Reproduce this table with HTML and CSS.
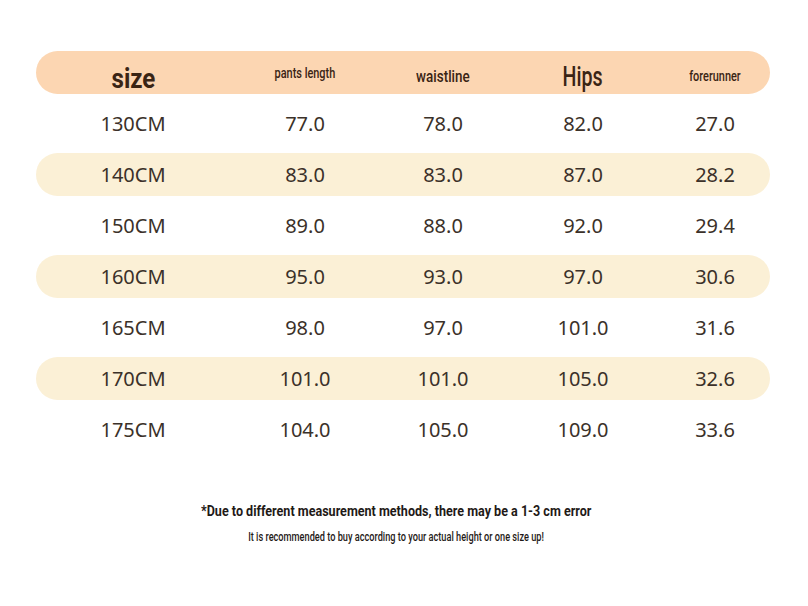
FILE: index.html
```html
<!DOCTYPE html>
<html>
<head>
<meta charset="utf-8">
<link rel="stylesheet" href="styles.css">
</head>
<body>
<div class="page">
  <div class="table">
    <div class="row head">
      <div class="cell c-size"><span>size</span></div>
      <div class="cell c-pants"><span>pants length</span></div>
      <div class="cell c-waist"><span>waistline</span></div>
      <div class="cell c-hips"><span>Hips</span></div>
      <div class="cell c-fore"><span>forerunner</span></div>
    </div>
    <div class="row"><div class="cell">130CM</div><div class="cell">77.0</div><div class="cell">78.0</div><div class="cell">82.0</div><div class="cell">27.0</div></div>
    <div class="row alt"><div class="cell">140CM</div><div class="cell">83.0</div><div class="cell">83.0</div><div class="cell">87.0</div><div class="cell">28.2</div></div>
    <div class="row"><div class="cell">150CM</div><div class="cell">89.0</div><div class="cell">88.0</div><div class="cell">92.0</div><div class="cell">29.4</div></div>
    <div class="row alt"><div class="cell">160CM</div><div class="cell">95.0</div><div class="cell">93.0</div><div class="cell">97.0</div><div class="cell">30.6</div></div>
    <div class="row"><div class="cell">165CM</div><div class="cell">98.0</div><div class="cell">97.0</div><div class="cell">101.0</div><div class="cell">31.6</div></div>
    <div class="row alt"><div class="cell">170CM</div><div class="cell">101.0</div><div class="cell">101.0</div><div class="cell">105.0</div><div class="cell">32.6</div></div>
    <div class="row"><div class="cell">175CM</div><div class="cell">104.0</div><div class="cell">105.0</div><div class="cell">109.0</div><div class="cell">33.6</div></div>
  </div>
  <div class="notes">
    <p class="note1"><span>*Due to different measurement methods, there may be a 1-3 cm error</span></p>
    <p class="note2"><span>It is recommended to buy according to your actual height or one size up!</span></p>
  </div>
</div>
</body>
</html>
```

FILE: styles.css
```css
html, body {
  margin: 0;
  padding: 0;
  background: #ffffff;
}
.page {
  width: 808px;
  height: 606px;
  padding: 51px 38px 0 36px;
  box-sizing: border-box;
}
.table {
  display: flex;
  flex-direction: column;
  gap: 8px;
}
.row {
  display: grid;
  grid-template-columns: 194px 150px 126px 154px 110px;
  height: 43px;
  align-items: center;
  border-radius: 22px;
  font-family: "Noto Sans", "Noto Sans CJK SC", sans-serif;
  font-size: 20px;
  color: #3b3129;
}
.row.head {
  background: #fcd6b2;
}
.row.alt {
  background: #fbf0d6;
}
.cell {
  text-align: center;
  line-height: 1;
}
.head .cell {
  align-self: end;
  font-family: Roboto, "DejaVu Sans", sans-serif;
  color: #3a2414;
}
.head .cell span {
  display: inline-block;
  transform-origin: center;
  white-space: nowrap;
}
.c-size {
  font-size: 28px;
  font-weight: bold;
  padding-bottom: 1px;
}
.c-size span {
  transform: scaleX(0.86);
}
.c-pants {
  font-size: 14px;
  font-weight: 500;
  padding-bottom: 14px;
}
.c-pants span {
  transform: scaleX(0.78);
}
.c-waist {
  font-size: 17px;
  font-weight: 500;
  padding-bottom: 9px;
}
.c-waist span {
  transform: scaleX(0.79);
}
.c-hips {
  font-size: 28px;
  font-weight: 500;
  padding-bottom: 3px;
}
.c-hips span {
  transform: scaleX(0.7);
}
.c-fore {
  font-size: 14px;
  font-weight: 500;
  padding-bottom: 11px;
}
.c-fore span {
  transform: scaleX(0.78);
}
.notes {
  padding-top: 51px;
  padding-right: 14px;
  text-align: center;
  font-family: Roboto, "DejaVu Sans", sans-serif;
  color: #1f1a17;
}
.notes span {
  display: inline-block;
  transform-origin: center;
  white-space: nowrap;
}
.note1 {
  margin: 0;
  font-size: 15px;
  font-weight: bold;
  line-height: 18px;
}
.note1 span {
  transform: scaleX(0.837);
}
.note2 {
  margin: 10px 0 0;
  font-size: 12px;
  font-weight: 500;
  line-height: 14px;
}
.note2 span {
  transform: scaleX(0.766);
}
```
